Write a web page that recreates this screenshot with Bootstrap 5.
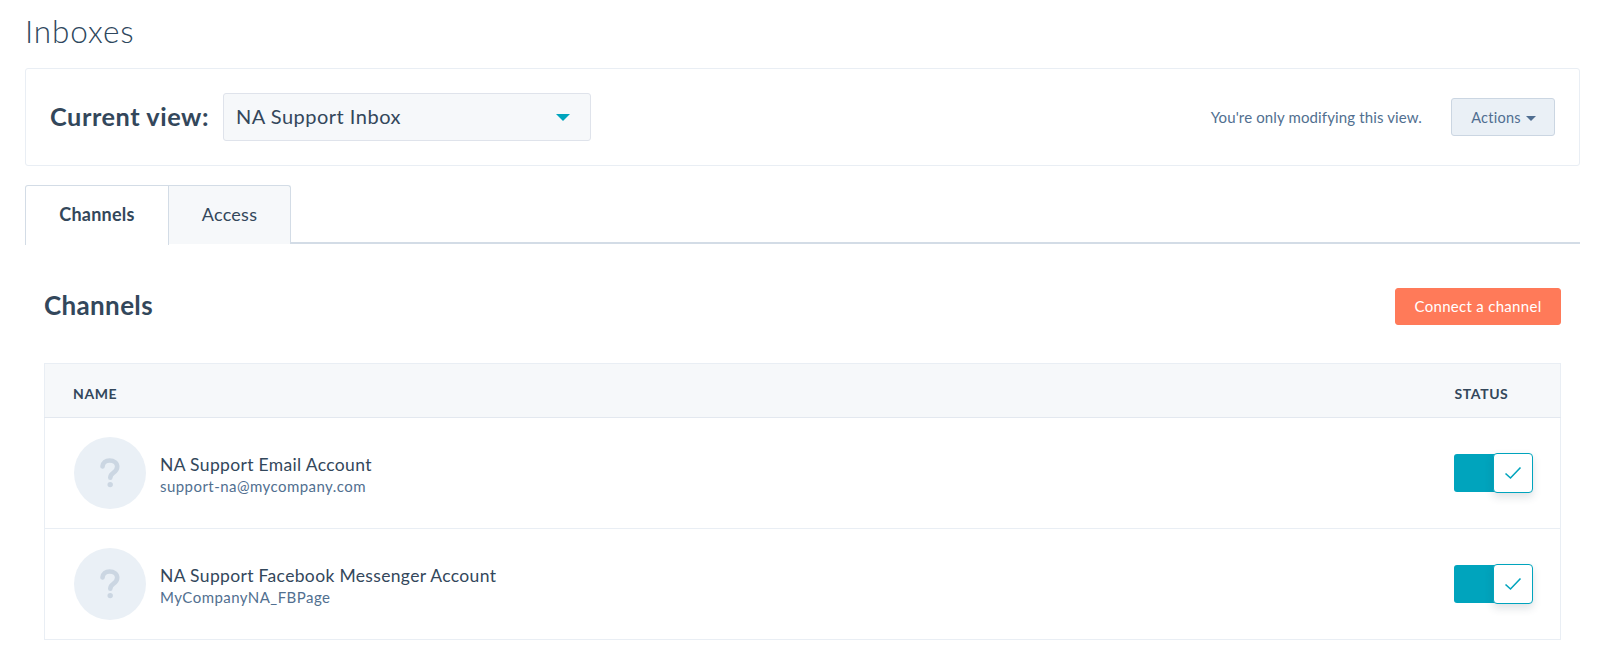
<!DOCTYPE html>
<html lang="en">
<head>
<meta charset="utf-8">
<title>Inboxes</title>
<link href="https://cdn.jsdelivr.net/npm/bootstrap@5.3.0/dist/css/bootstrap.min.css" rel="stylesheet">
<style>
html,body{height:668px;overflow:hidden}
body{font-family:"Lato","Noto Sans",sans-serif;color:#33475b;background:#fff}
.page-wrap{padding:12px 20px 0 25px}
.page-title{font-size:31.5px;font-weight:300;line-height:38px;margin:0 0 18px;letter-spacing:.85px;color:#2e475d}
.view-panel{height:98px;border:1px solid #e9eef4;border-radius:3px;padding:0 24px 0 24px}
.view-label{font-size:25.3px;font-weight:700;letter-spacing:.55px;margin-right:14px;line-height:1}
.view-select{width:368px;height:48px;background:#f6f8fa;border:1px solid #dfe3eb;border-radius:3px;padding:0 20px 2px 12px;font-size:20px;letter-spacing:.5px;color:#33475b}
.caret-teal{width:0;height:0;border-left:7px solid transparent;border-right:7px solid transparent;border-top:7px solid #00a4bd;margin-top:2px}
.view-note{font-size:15px;letter-spacing:.13px;color:#516f90;margin-right:29px}
.actions-btn{width:104px;height:38px;background:#eaf0f6;border:1px solid #cbd6e2;border-radius:3px;font-size:14.5px;letter-spacing:.25px;color:#506e91;padding:1px 0 0 1px}
.actions-btn:hover{background:#eaf0f6;color:#506e91;border-color:#cbd6e2}
.caret-small{display:inline-block;width:0;height:0;margin-left:5px;vertical-align:2px;border-left:5px solid transparent;border-right:5px solid transparent;border-top:5px solid #506e91}
.tab-strip{margin-top:19px;height:59px;border-bottom:2px solid #d3dce6;flex-wrap:nowrap}
.tab-item{height:59px;display:flex;align-items:center;justify-content:center;border:1px solid #d3dce6;border-bottom:0;font-size:18px;color:#33475b;text-decoration:none;letter-spacing:.25px;padding-bottom:2px}
.tab-active{width:144px;background:#fff;border-radius:3px 0 0 0;font-weight:700;position:relative;height:60px;border-right:1px solid #d3dce6;z-index:1}
.tab-idle{width:122px;background:#f6f8fa;border-left:0;border-radius:0 3px 0 0}
.channels-area{padding:0 19px 0 19px}
.channels-head{margin-top:44px;height:37px;margin-bottom:38px}
.channels-title{font-size:26px;font-weight:700;letter-spacing:.35px;margin:0 0 4px;line-height:1;color:#33475b}
.connect-btn{width:166px;height:37px;background:#ff7a59;border:1px solid #ff7a59;border-radius:3px;color:#fff;font-size:15px;padding:0;letter-spacing:.3px}
.connect-btn:hover{background:#ff7a59;border-color:#ff7a59;color:#fff}
.channel-table{width:1517px;margin:0;border:1px solid #e9eef4;border-collapse:collapse;color:#33475b}
.channel-table th{background:#f6f8fa;height:54px;padding:5px 29px 0 28px;font-size:14px;font-weight:700;letter-spacing:.6px;border-bottom:1px solid #e3e8ef;vertical-align:middle;color:#33475b;box-shadow:none}
.channel-table td{height:111px;padding:0 29px;border-bottom:1px solid #e9eef4;vertical-align:middle;box-shadow:none}
.status-col{width:136px}
.channel-table th.status-col{padding-left:30px;padding-right:0}
.channel-table td.status-col{padding-left:29px;padding-right:0}
.avatar-q{width:72px;height:72px;border-radius:50%;background:#eaf0f6;flex:none;margin-right:14px}
.avatar-q svg{display:block}
.chan-text{margin-top:2px}
.chan-name{font-size:17.5px;line-height:22px;letter-spacing:.34px;color:#33475b;padding-top:2px}
.chan-sub{font-size:15px;line-height:20px;letter-spacing:.45px;color:#516f90;margin-top:0}
.toggle-track{width:79px;height:40px;position:relative;margin-top:-1px}
.toggle-fill{width:50px;height:38px;background:#00a4bd;border-radius:3px;position:relative;top:1px}
.toggle-knob{position:absolute;left:39px;top:0;width:40px;height:40px;background:#fff;border:1px solid #00a4bd;border-radius:4px;box-shadow:0 4px 8px rgba(45,62,80,.16)}
</style>
</head>
<body>
<div class="page-wrap">
  <h1 class="page-title">Inboxes</h1>

  <div class="view-panel d-flex align-items-center">
    <span class="view-label">Current view:</span>
    <div class="view-select d-flex align-items-center justify-content-between">
      <span>NA Support Inbox</span><span class="caret-teal"></span>
    </div>
    <span class="view-note ms-auto">You're only modifying this view.</span>
    <button type="button" class="btn actions-btn">Actions<span class="caret-small"></span></button>
  </div>

  <div class="tab-strip d-flex">
    <a class="tab-item tab-active" href="#">Channels</a>
    <a class="tab-item tab-idle" href="#">Access</a>
  </div>

  <div class="channels-area">
    <div class="channels-head d-flex align-items-center justify-content-between">
      <h2 class="channels-title">Channels</h2>
      <button type="button" class="btn connect-btn">Connect a channel</button>
    </div>

    <table class="table channel-table">
      <thead>
        <tr><th>NAME</th><th class="status-col">STATUS</th></tr>
      </thead>
      <tbody>
        <tr>
          <td>
            <div class="d-flex align-items-center">
              <div class="avatar-q d-flex align-items-center justify-content-center">
                <svg width="20" height="30" viewBox="0 0 20 30" fill="none"><path d="M2.5 8.5C2.8 4.6 5.7 2.5 9.6 2.5c4.3 0 7.6 2.4 7.6 6.3 0 3-1.7 4.5-3.9 6-2 1.4-3 2.5-3 4.9" stroke="#cbd6e2" stroke-width="4.6" stroke-linecap="round"/><circle cx="10.2" cy="26.6" r="2.7" fill="#cbd6e2"/></svg>
              </div>
              <div class="chan-text">
                <div class="chan-name">NA Support Email Account</div>
                <div class="chan-sub">support-na@mycompany.com</div>
              </div>
            </div>
          </td>
          <td class="status-col">
            <div class="toggle-track">
              <div class="toggle-fill"></div>
              <div class="toggle-knob d-flex align-items-center justify-content-center">
                <svg width="18" height="14" viewBox="0 0 18 14" fill="none"><path d="M1.5 7.5 6.5 12 16.5 1.5" stroke="#00a4bd" stroke-width="1.6"/></svg>
              </div>
            </div>
          </td>
        </tr>
        <tr>
          <td>
            <div class="d-flex align-items-center">
              <div class="avatar-q d-flex align-items-center justify-content-center">
                <svg width="20" height="30" viewBox="0 0 20 30" fill="none"><path d="M2.5 8.5C2.8 4.6 5.7 2.5 9.6 2.5c4.3 0 7.6 2.4 7.6 6.3 0 3-1.7 4.5-3.9 6-2 1.4-3 2.5-3 4.9" stroke="#cbd6e2" stroke-width="4.6" stroke-linecap="round"/><circle cx="10.2" cy="26.6" r="2.7" fill="#cbd6e2"/></svg>
              </div>
              <div class="chan-text">
                <div class="chan-name">NA Support Facebook Messenger Account</div>
                <div class="chan-sub">MyCompanyNA_FBPage</div>
              </div>
            </div>
          </td>
          <td class="status-col">
            <div class="toggle-track">
              <div class="toggle-fill"></div>
              <div class="toggle-knob d-flex align-items-center justify-content-center">
                <svg width="18" height="14" viewBox="0 0 18 14" fill="none"><path d="M1.5 7.5 6.5 12 16.5 1.5" stroke="#00a4bd" stroke-width="1.6"/></svg>
              </div>
            </div>
          </td>
        </tr>
      </tbody>
    </table>
  </div>
</div>
<script src="https://cdn.jsdelivr.net/npm/bootstrap@5.3.0/dist/js/bootstrap.bundle.min.js"></script>
</body>
</html>
